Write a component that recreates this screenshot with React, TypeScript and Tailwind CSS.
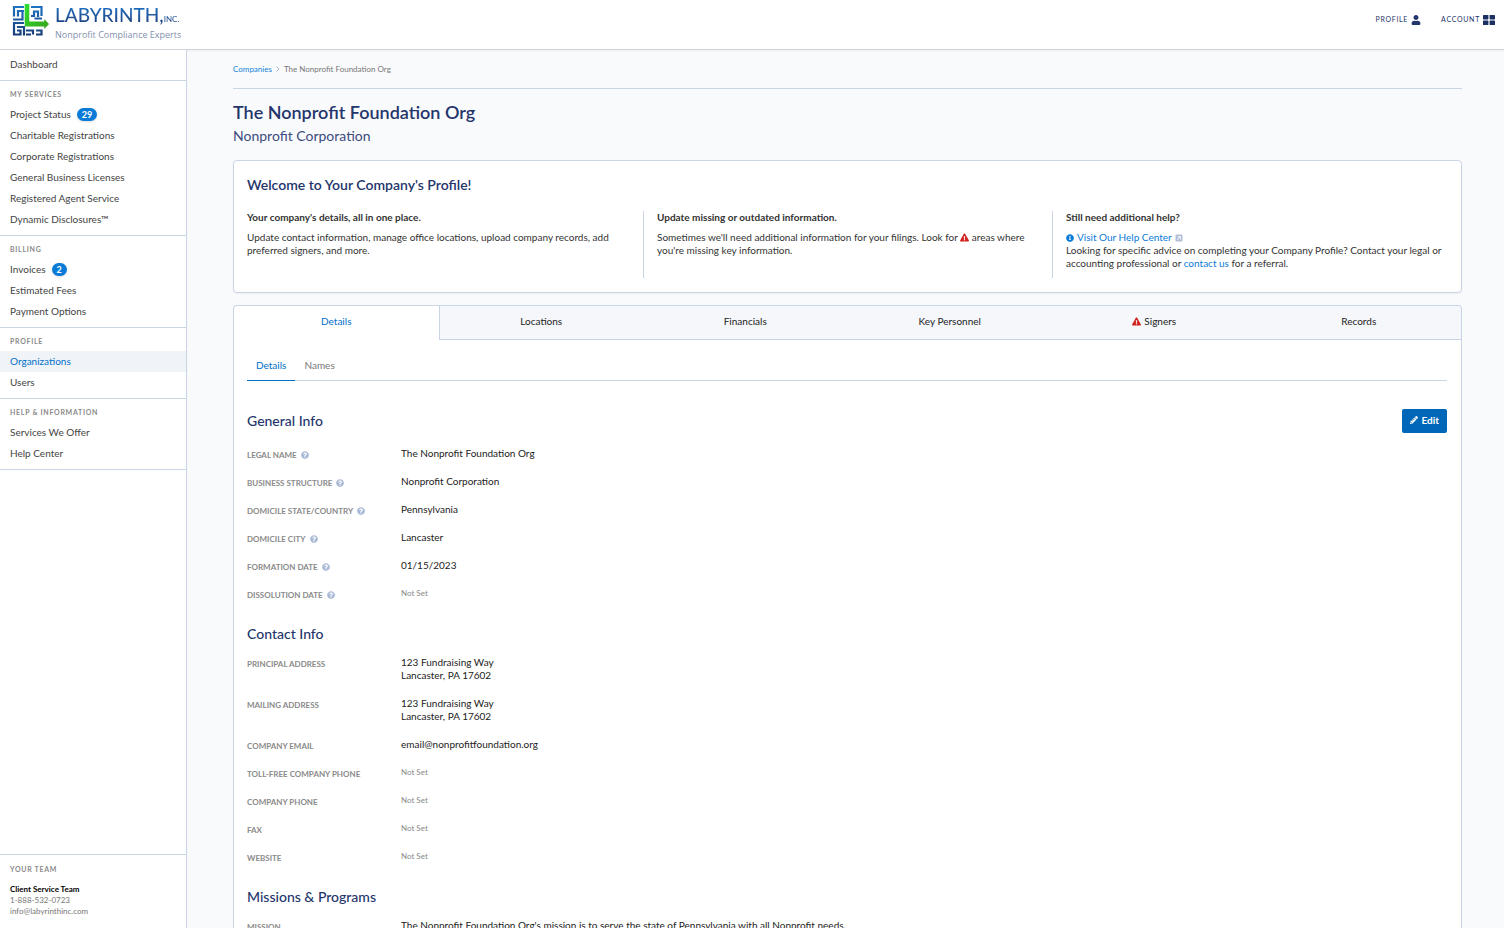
import type { ReactNode } from "react";
import { FaExclamationTriangle, FaInfoCircle, FaPencilAlt, FaQuestionCircle, FaUser } from "react-icons/fa";
import { FaSquareArrowUpRight } from "react-icons/fa6";

type NavItem = { label: string; badge?: number; active?: boolean };
type NavSection = { title: string; items: NavItem[] };
type Field = { label: string; help?: boolean; value?: string[] };

const navSections: NavSection[] = [
  {
    title: "My Services",
    items: [
      { label: "Project Status", badge: 29 },
      { label: "Charitable Registrations" },
      { label: "Corporate Registrations" },
      { label: "General Business Licenses" },
      { label: "Registered Agent Service" },
      { label: "Dynamic Disclosures™" },
    ],
  },
  {
    title: "Billing",
    items: [{ label: "Invoices", badge: 2 }, { label: "Estimated Fees" }, { label: "Payment Options" }],
  },
  { title: "Profile", items: [{ label: "Organizations", active: true }, { label: "Users" }] },
  { title: "Help & Information", items: [{ label: "Services We Offer" }, { label: "Help Center" }] },
];

const tabs = ["Details", "Locations", "Financials", "Key Personnel", "Signers", "Records"];

const generalInfo: Field[] = [
  { label: "Legal Name", help: true, value: ["The Nonprofit Foundation Org"] },
  { label: "Business Structure", help: true, value: ["Nonprofit Corporation"] },
  { label: "Domicile State/Country", help: true, value: ["Pennsylvania"] },
  { label: "Domicile City", help: true, value: ["Lancaster"] },
  { label: "Formation Date", help: true, value: ["01/15/2023"] },
  { label: "Dissolution Date", help: true },
];

const contactInfo: Field[] = [
  { label: "Principal Address", value: ["123 Fundraising Way", "Lancaster, PA 17602"] },
  { label: "Mailing Address", value: ["123 Fundraising Way", "Lancaster, PA 17602"] },
  { label: "Company Email", value: ["email@nonprofitfoundation.org"] },
  { label: "Toll-Free Company Phone" },
  { label: "Company Phone" },
  { label: "Fax" },
  { label: "Website" },
];

const missions: Field[] = [
  {
    label: "Mission",
    value: ["The Nonprofit Foundation Org's mission is to serve the state of Pennsylvania with all Nonprofit needs."],
  },
];

function Logo() {
  return (
    <a href="#" className="flex items-start gap-[5px]">
      <svg viewBox="0 0 38 34" className="h-[34px] w-[38px]" fill="none" aria-hidden="true">
        <defs>
          <linearGradient id="maze" x1="0" y1="0" x2="0" y2="34" gradientUnits="userSpaceOnUse">
            <stop offset="0" stopColor="#2076c8" />
            <stop offset="1" stopColor="#17376f" />
          </linearGradient>
          <linearGradient id="arrow" x1="13" y1="0" x2="36" y2="24" gradientUnits="userSpaceOnUse">
            <stop offset="0" stopColor="#2fe02f" />
            <stop offset="1" stopColor="#36a51c" />
          </linearGradient>
        </defs>
        <g stroke="url(#maze)" strokeWidth="2.2">
          <path d="M12 3H2v9.5M12 7H6v5.5M10.500 7v8.500H1" />
          <path d="M19 3h10.500v9M19 12h3V7.500h4V13M30 14.500h-7.500" />
          <path d="M12 19H2v11.500h6.500v-4H5M12 23H5M12 22v9.500" />
          <path d="M14 26.500h7v4M14 30.500h5M24 26.500h5.500v4H24" />
        </g>
        <path d="M12.700 0h4.600v17.500h15V15l4.700 5-4.700 5v-2.500H12.700z" fill="url(#arrow)" />
      </svg>
      <span className="flex flex-col">
        <span className="bg-linear-to-b from-[#2079cc] to-[#1a2f66] bg-clip-text text-[19px] leading-[22px] font-medium text-transparent">
          LABYRINTH,<span className="text-[8px]">INC.</span>
        </span>
        <span className="text-[9px] leading-[9px] text-[#8490ae] [font-family:'Open_Sans',sans-serif]">
          Nonprofit Compliance Experts
        </span>
      </span>
    </a>
  );
}

function SectionLabel({ children }: { children: ReactNode }) {
  return <h2 className="text-[7px] font-bold tracking-widest text-[#8a8a8a] uppercase">{children}</h2>;
}

function NavLink({ label, badge, active }: NavItem) {
  return (
    <a
      href="#"
      className={`flex h-[21px] items-center gap-1.5 px-2.5 pb-px ${active ? "bg-[#f0f4f8] text-[#0070c9]" : "text-[#444]"}`}
    >
      {label}
      {badge !== undefined && (
        <span className="rounded-full bg-[#0b7bd8] px-[5px] text-[9px] leading-[13px] font-bold text-white shadow-sm">{badge}</span>
      )}
    </a>
  );
}

function FieldList({ fields }: { fields: Field[] }) {
  return (
    <dl>
      {fields.map((f) => (
        <div key={f.label} className="flex pb-3.5">
          <dt className="flex w-[154px] shrink-0 gap-1 pt-0.5 text-[8px] leading-3 font-bold text-[#8a8a8a] uppercase">
            {f.label}
            {f.help && <FaQuestionCircle className="mt-0.5 size-2 text-[#a9b9d6]" />}
          </dt>
          {f.value ? (
            <dd className="pb-px text-[#222]">
              {f.value.map((line) => (
                <div key={line}>{line}</div>
              ))}
            </dd>
          ) : (
            <dd className="pb-px text-[8px] text-[#888]">Not Set</dd>
          )}
        </div>
      ))}
    </dl>
  );
}

function InfoHeading({ children }: { children: ReactNode }) {
  return <h3 className="mt-[9px] mb-3 text-sm leading-5 font-medium text-[#24356b]">{children}</h3>;
}

export default function App() {
  return (
    <div className="flex h-screen flex-col bg-[#f9fafc] font-[Lato,sans-serif] text-[10px] leading-[13px] text-[#333]">
      <header className="flex h-[50px] shrink-0 items-start justify-between border-b border-[#cfd3da] bg-white pt-1 pr-[9px] pl-3 shadow-xs">
        <Logo />
        <nav className="flex gap-5 pt-[9px] text-[7px] tracking-widest text-[#24356b]">
          <a href="#" className="flex items-center gap-[3px]">
            PROFILE
            <FaUser className="size-2.5" />
          </a>
          <a href="#" className="flex items-center gap-[3px]">
            ACCOUNT
            <svg viewBox="0 0 12 10" className="h-2.5 w-3 fill-[#1c2f63]" aria-hidden="true">
              <rect width="5.4" height="4.4" rx=".6" />
              <rect x="6.6" width="5.4" height="4.4" rx=".6" />
              <rect y="5.6" width="5.4" height="4.4" rx=".6" />
              <rect x="6.6" y="5.6" width="5.4" height="4.4" rx=".6" />
            </svg>
          </a>
        </nav>
      </header>

      <div className="flex min-h-0 flex-1">
        <aside className="flex w-[187px] shrink-0 flex-col justify-between border-r border-[#c9d5e5] bg-white">
          <nav>
            <div className="border-b border-[#c9d5e5] pt-1 pb-[5px]">
              <NavLink label="Dashboard" />
            </div>
            {navSections.map((s) => (
              <section key={s.title} className="border-b border-[#c9d5e5] pb-[5px]">
                <div className="flex h-[23px] items-center px-2.5 pt-1">
                  <SectionLabel>{s.title}</SectionLabel>
                </div>
                {s.items.map((item) => (
                  <NavLink key={item.label} {...item} />
                ))}
              </section>
            ))}
          </nav>
          <div className="border-t border-[#c9d5e5] px-2.5 pt-[9px] pb-[11px] text-[8px] leading-[11px] text-[#777]">
            <SectionLabel>Your Team</SectionLabel>
            <p className="mt-[9px] font-bold text-black">Client Service Team</p>
            <p>1-888-532-0723</p>
            <a href="#">info@labyrinthinc.com</a>
          </div>
        </aside>

        <main className="min-w-0 flex-1 overflow-y-auto pr-[42px] pl-[46px] [scrollbar-width:none]">
          <div className="flex h-[39px] items-center gap-1 border-b border-[#c9d5e5] text-[8px] text-[#777]">
            <a href="#" className="text-[#1583d8]">Companies</a>
            <svg viewBox="0 0 4 6" className="h-1.5 w-1" fill="none" stroke="#a9b9d6" aria-hidden="true">
              <path d="M.5.5 3 3 .5 5.500" />
            </svg>
            <span>The Nonprofit Foundation Org</span>
          </div>
          <h1 className="mt-[11px] text-lg leading-6 font-semibold text-[#24356b]">The Nonprofit Foundation Org</h1>
          <p className="mt-0.5 text-sm leading-5 text-[#3c4b7c]">Nonprofit Corporation</p>

          <section className="mt-3.5 min-h-[133px] rounded border border-[#c9d5e5] bg-white pt-3.5 shadow-xs">
            <h2 className="px-[13px] text-sm leading-5 font-semibold text-[#24356b]">Welcome to Your Company's Profile!</h2>
            <div className="mt-4 mb-[13px] grid min-h-[67px] grid-cols-3">
              <div className="px-[13px]">
                <h3 className="mb-[7px] font-bold">Your company's details, all in one place.</h3>
                <p>Update contact information, manage office locations, upload company records, add preferred signers, and more.</p>
              </div>
              <div className="border-l border-[#c9d5e5] px-[13px]">
                <h3 className="mb-[7px] font-bold">Update missing or outdated information.</h3>
                <p>
                  Sometimes we'll need additional information for your filings. Look for{" "}
                  <FaExclamationTriangle className="inline size-[9px] align-[-1px] text-[#d0211c]" /> areas where you're missing key
                  information.
                </p>
              </div>
              <div className="border-l border-[#c9d5e5] px-[13px]">
                <h3 className="mb-[7px] font-bold">Still need additional help?</h3>
                <a href="#" className="flex items-center gap-[3px] text-[#0b7bd8]">
                  <FaInfoCircle className="size-2" />
                  Visit Our Help Center
                  <FaSquareArrowUpRight className="size-2 text-[#b4c0d8]" />
                </a>
                <p>
                  Looking for specific advice on completing your Company Profile? Contact your legal or accounting professional or{" "}
                  <a href="#" className="text-[#0b7bd8]">contact us</a> for a referral.
                </p>
              </div>
            </div>
          </section>

          <section className="mt-3 rounded-t border border-b-0 border-[#c9d5e5] bg-white">
            <div className="grid grid-cols-6" role="tablist">
              {tabs.map((tab, i) => (
                <button
                  key={tab}
                  role="tab"
                  aria-selected={i === 0}
                  className={`flex h-[34px] items-center justify-center gap-[3px] border-b pb-0.5 ${
                    i === 0 ? "border-white text-[#0070c9]" : "border-[#c9d5e5] bg-[#f5f7fb] text-[#222] nth-2:border-l last:rounded-tr"
                  }`}
                >
                  {tab === "Signers" && <FaExclamationTriangle className="size-[9px] text-[#d0211c]" />}
                  {tab}
                </button>
              ))}
            </div>
            <div className="pr-3.5 pl-[13px]">
              <div className="mt-3 flex h-[29px] border-b border-[#c9d5e5]" role="tablist">
                <button role="tab" aria-selected="true" className="-mb-px border-b border-[#0070c9] px-[9px] pb-0.5 text-[#0070c9]">
                  Details
                </button>
                <button role="tab" aria-selected="false" className="px-[9px] pb-0.5 text-[#777]">
                  Names
                </button>
              </div>
              <div className="mt-7 mb-3.5 flex h-6 items-center justify-between">
                <h3 className="text-sm leading-5 font-medium text-[#24356b]">General Info</h3>
                <button className="flex h-6 items-center gap-[3px] rounded-xs bg-[#0067b8] px-2 pb-0.5 font-bold text-white">
                  <FaPencilAlt className="size-2" />
                  Edit
                </button>
              </div>
              <FieldList fields={generalInfo} />
              <InfoHeading>Contact Info</InfoHeading>
              <FieldList fields={contactInfo} />
              <InfoHeading>Missions &amp; Programs</InfoHeading>
              <FieldList fields={missions} />
            </div>
          </section>
        </main>
      </div>
    </div>
  );
}
